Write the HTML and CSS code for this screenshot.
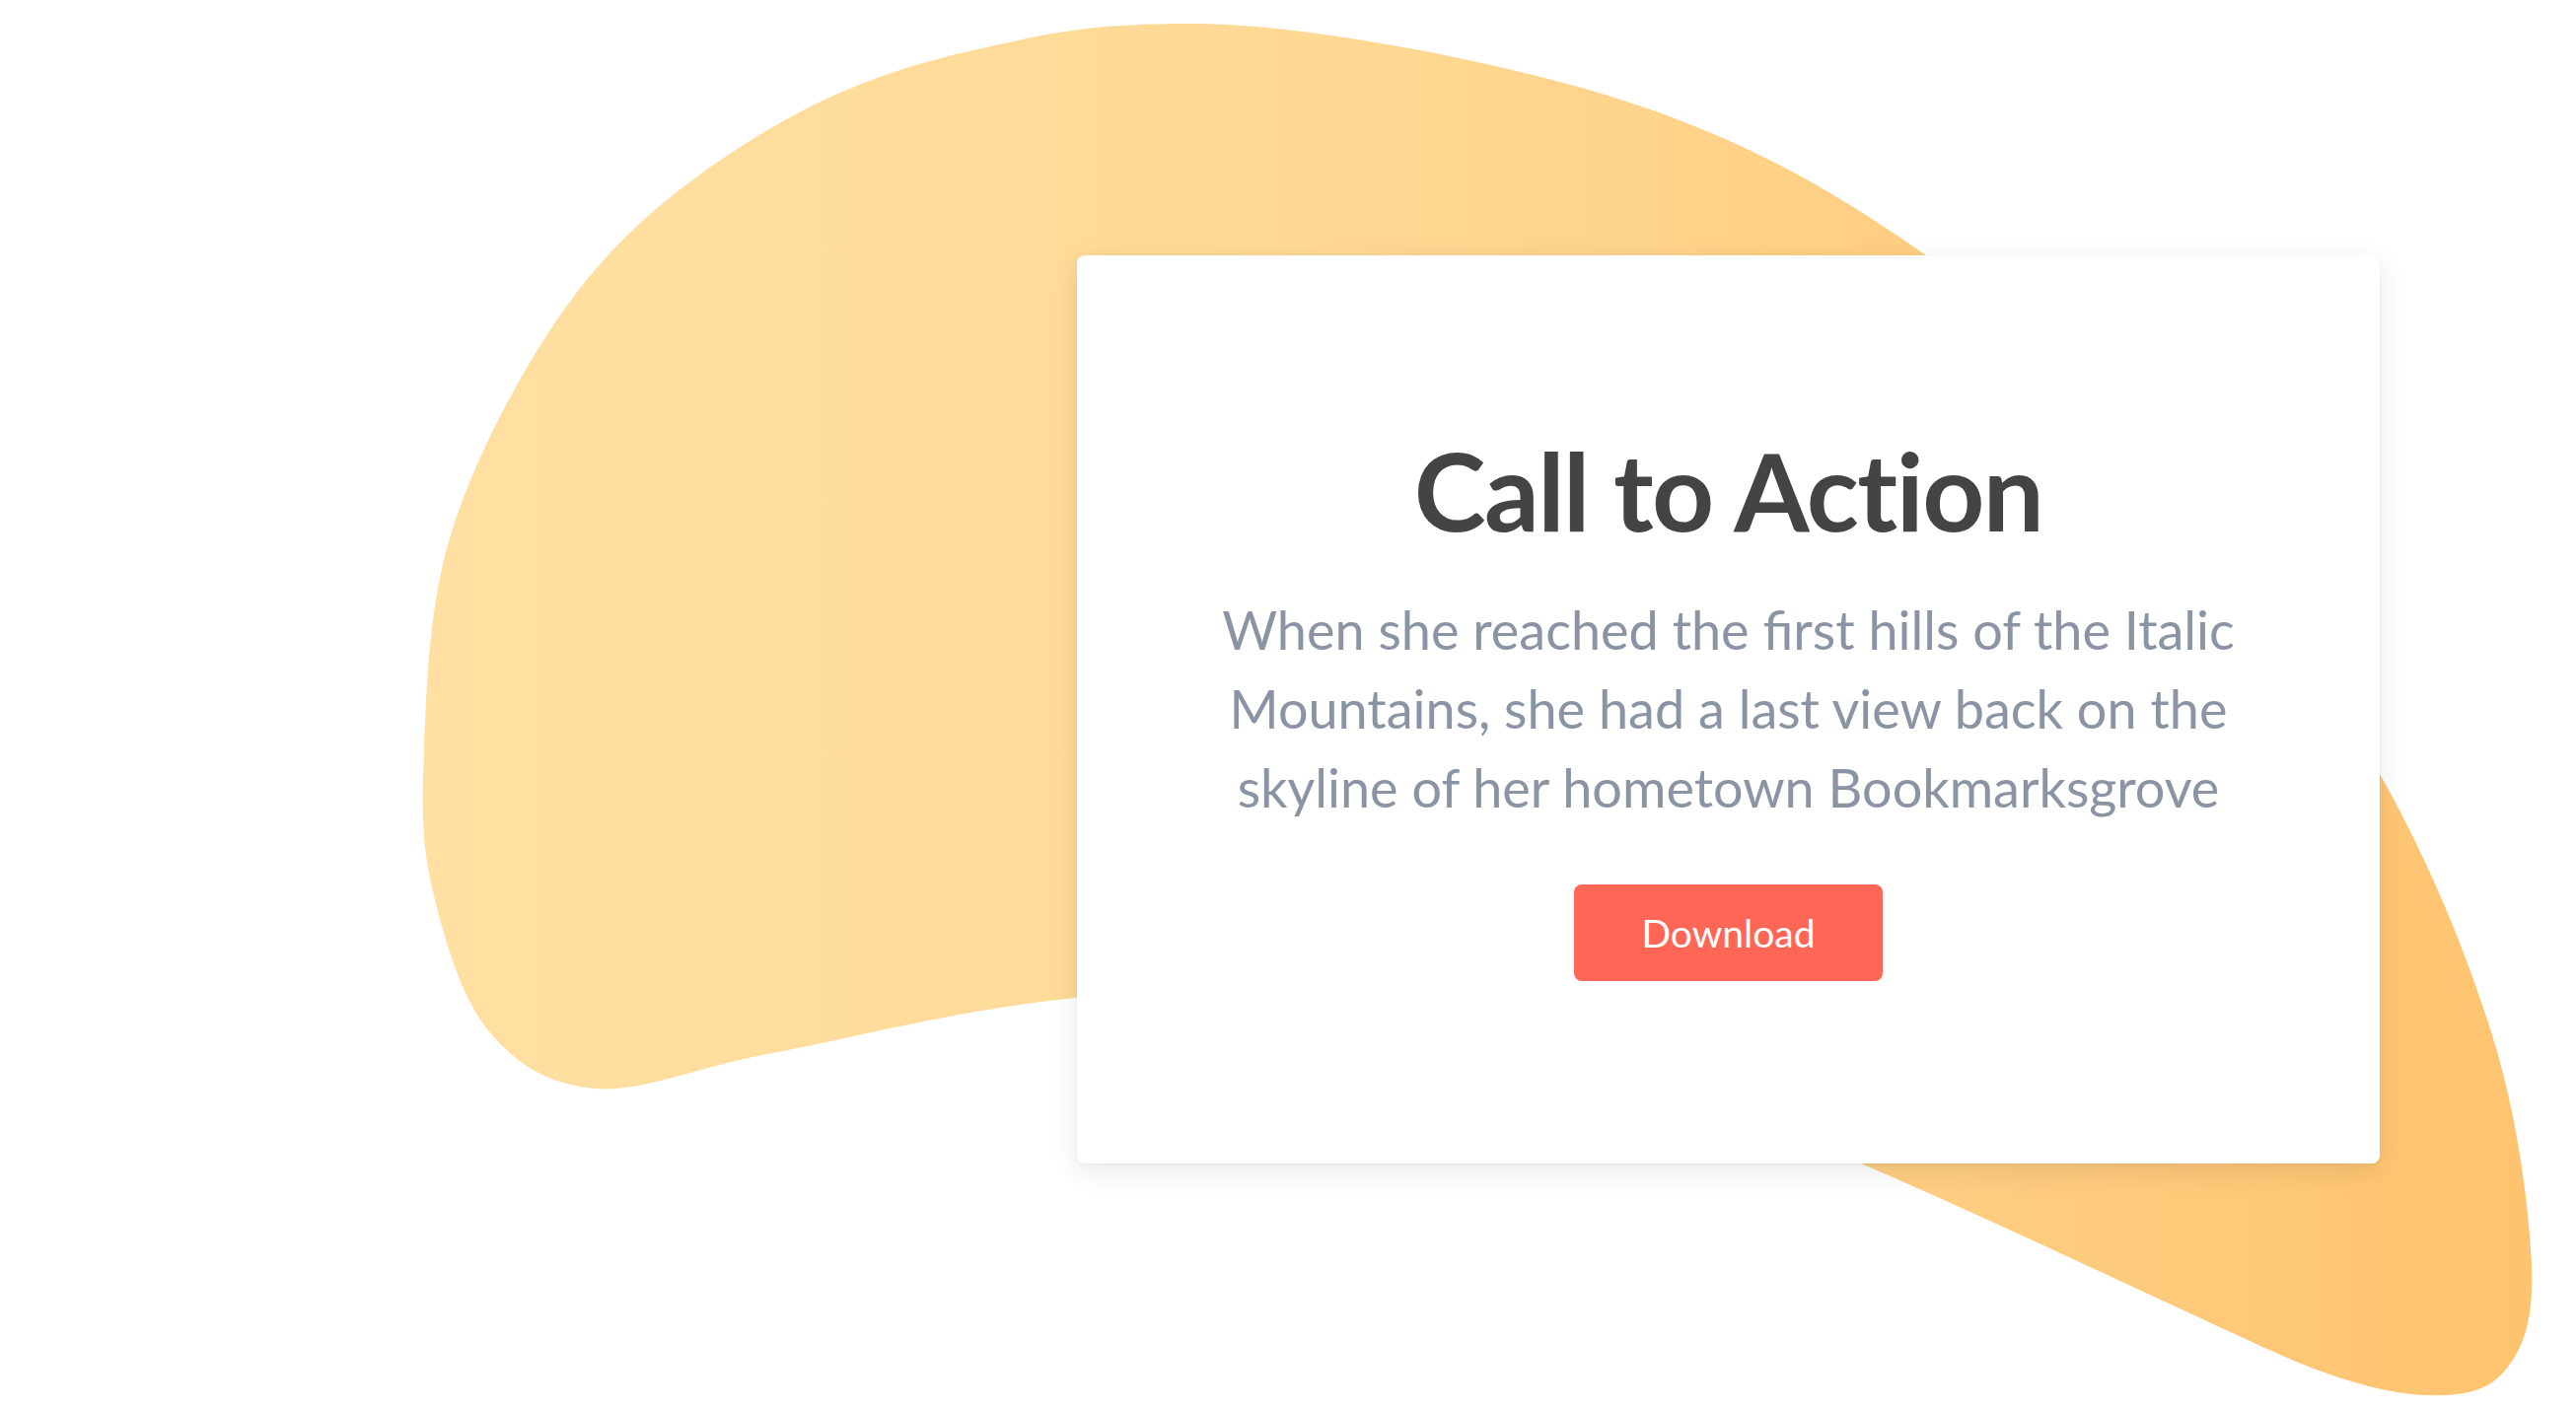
FILE: index.html
```html
<!DOCTYPE html>
<html lang="en">
<head>
<meta charset="utf-8">
<title>Call to Action</title>
<link rel="stylesheet" href="styles.css">
</head>
<body>
<main class="stage">
  <svg class="blob" width="2612" height="1429" viewBox="0 0 2612 1429" aria-hidden="true">
    <defs>
      <linearGradient id="blobFill" gradientUnits="userSpaceOnUse" x1="430" y1="0" x2="2567" y2="0">
        <stop offset="0" stop-color="#FFE0A2"/>
        <stop offset="0.45" stop-color="#FED893"/>
        <stop offset="1" stop-color="#FEC36F"/>
      </linearGradient>
    </defs>
    <path fill="url(#blobFill)" d="M1210 24
      C1320 24 1516 61 1640 100
      C1764 139 1856 191 1953 259
      C2050 327 2143 422 2220 510
      C2297 598 2362 695 2413 785
      C2464 875 2501 967 2527 1050
      C2553 1133 2565 1228 2567 1285
      C2569 1342 2558 1368 2540 1390
      C2522 1412 2495 1416 2460 1415
      C2425 1414 2378 1401 2333 1383
      C2288 1365 2034 1243 1887 1180
      C1740 1117 1583 1033 1450 1005
      C1317 977 1203 1002 1092 1012
      C981 1022 864 1053 783 1068
      C702 1083 652 1108 604 1104
      C556 1100 523 1079 495 1045
      C467 1011 449 947 438 900
      C427 853 428 817 430 760
      C432 703 435 624 452 560
      C469 496 501 430 533 375
      C565 320 598 274 645 230
      C692 186 759 140 818 110
      C877 80 935 62 1000 48
      C1065 34 1100 24 1210 24 Z"/>
  </svg>
  <section class="card">
    <h1 class="card-title">Call to Action</h1>
    <p class="card-text">When she reached the first hills of the Italic Mountains, she had a last view back on the skyline of her hometown Bookmarksgrove</p>
    <a class="card-button" href="#">Download</a>
  </section>
</main>
</body>
</html>
```

FILE: styles.css
```css
* {
  box-sizing: border-box;
}

html, body {
  margin: 0;
  padding: 0;
  background: #ffffff;
}

body {
  font-family: Lato, "Open Sans", "Liberation Sans", sans-serif;
}

.stage {
  position: relative;
  width: 2612px;
  height: 1429px;
  overflow: hidden;
  display: flex;
  justify-content: flex-end;
  align-items: flex-start;
  padding: 259px 199px 0 0;
}

.blob {
  position: absolute;
  left: 0;
  top: 0;
  z-index: 0;
}

.card {
  position: relative;
  z-index: 1;
  width: 1321px;
  height: 921px;
  background: #ffffff;
  border-radius: 8px;
  box-shadow: 0 8px 28px rgba(0, 0, 0, 0.09), 0 1px 4px rgba(0, 0, 0, 0.04);
  display: flex;
  flex-direction: column;
  align-items: center;
  padding-top: 171px;
  text-align: center;
}

.card-title {
  margin: 0;
  font-family: Lato, "Liberation Sans", sans-serif;
  font-weight: 700;
  font-size: 110px;
  line-height: 1.2;
  color: #444444;
  letter-spacing: -1.5px;
}

.card-text {
  margin: 37px 0 0;
  max-width: 1110px;
  font-family: Lato, "Liberation Sans", sans-serif;
  font-weight: 400;
  font-size: 54px;
  line-height: 80px;
  color: #8a94a4;
}

.card-button {
  margin-top: 58px;
  display: inline-block;
  height: 98px;
  padding: 0 68px;
  line-height: 98px;
  background: #ff6655;
  color: #ffffff;
  border-radius: 8px;
  font-family: Lato, "Liberation Sans", sans-serif;
  font-size: 39px;
  font-weight: 400;
  text-decoration: none;
}
```
